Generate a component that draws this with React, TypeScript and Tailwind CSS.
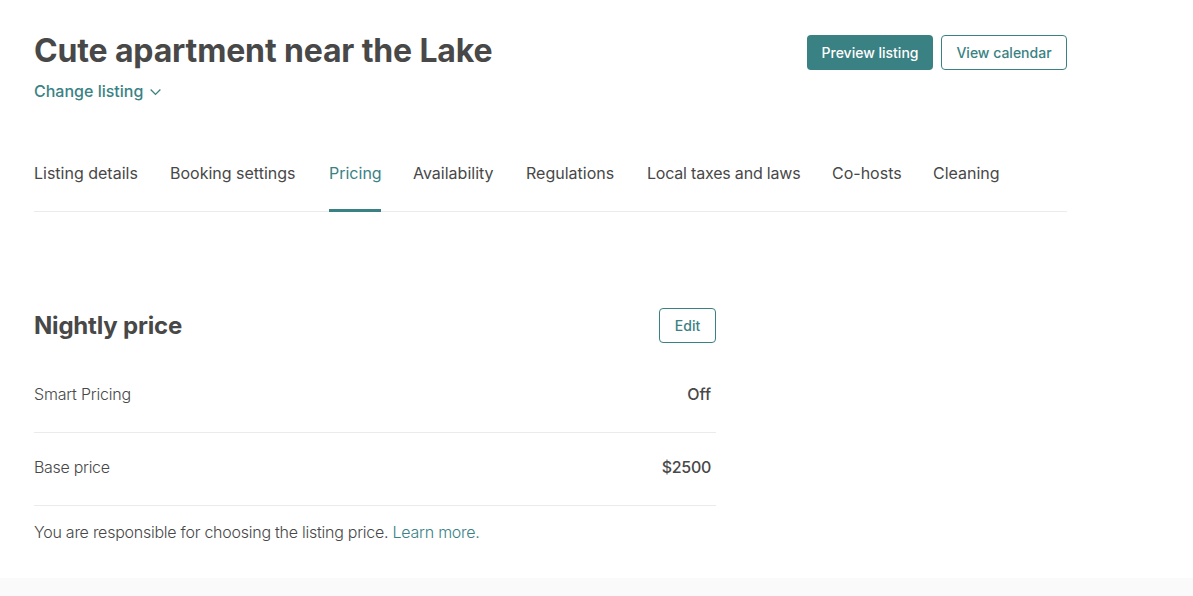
import React from "react";

const tabs: { label: string; cls: string }[] = [
  { label: "Listing details", cls: "w-[104px]" },
  { label: "Booking settings", cls: "w-[127px]" },
  { label: "Pricing", cls: "w-[52px]" },
  { label: "Availability", cls: "w-[81px]" },
  { label: "Regulations", cls: "w-[89px]" },
  { label: "Local taxes and laws", cls: "w-[153px] tracking-[-0.2px]" },
  { label: "Co-hosts", cls: "w-[69px]" },
  { label: "Cleaning", cls: "w-[66px]" },
];

export default function App() {
  return (
    <div
      className="bg-white text-[#484848] min-h-[596px]"
      style={{ fontFamily: "Inter, 'Noto Sans', sans-serif" }}
    >
      <div className="pl-[34px] w-[1067px]">
        <div className="pt-[31px] flex justify-between items-start">
          <div>
            <h1 className="text-[32px] leading-[40px] font-bold tracking-[-0.15px] text-[#484848]">
              Cute apartment near the Lake
            </h1>
            <button className="mt-[8px] flex items-center gap-[6px] text-[16px] leading-[24px] text-[#3a8285] font-medium">
              Change listing
              <svg width="13" height="13" viewBox="0 0 16 16" fill="none" stroke="currentColor" strokeWidth="1.6">
                <path d="M2 5.5l6 6 6-6" />
              </svg>
            </button>
          </div>
          <div className="flex gap-[8px] mt-[4px]">
            <button className="w-[126px] h-[35px] rounded-[4px] bg-[#3a8183] text-white text-[14px] font-medium">
              Preview listing
            </button>
            <button className="w-[126px] h-[35px] rounded-[4px] border border-[#3a8183] text-[#3a8183] text-[14px] font-medium">
              View calendar
            </button>
          </div>
        </div>

        <div className="mt-[58px] flex gap-[32px] border-b border-[#ebebeb]">
          {tabs.map((t) => (
            <div
              key={t.label}
              className={
                t.label === "Pricing"
                  ? `${t.cls} whitespace-nowrap pb-[24px] border-b-[3px] border-[#3a8183] -mb-px text-[16px] leading-[24px] text-[#3a8285]`
                  : `${t.cls} whitespace-nowrap pb-[24px] border-b-[3px] border-transparent -mb-px text-[16px] leading-[24px] text-[#484848]`
              }
            >
              {t.label}
            </div>
          ))}
        </div>

        <div className="mt-[96px] w-[682px]">
          <div className="flex items-center justify-between">
            <h2 className="text-[24px] leading-[32px] font-bold tracking-[-0.2px]">Nightly price</h2>
            <button className="w-[57px] h-[35px] rounded-[4px] border border-[#3a8183] text-[#3a8183] text-[14px] font-medium">
              Edit
            </button>
          </div>
          <div className="mt-[17px] flex justify-between pt-[22px] pb-[26px] border-b border-[#ebebeb] text-[16px] leading-[24px]">
            <span className="font-light tracking-[-0.2px]">Smart Pricing</span>
            <span className="pr-[5px] font-medium">Off</span>
          </div>
          <div className="flex justify-between pt-[22px] pb-[26px] border-b border-[#ebebeb] text-[16px] leading-[24px]">
            <span className="font-light tracking-[-0.3px]">Base price</span>
            <span className="pr-[5px] font-medium tracking-[-0.3px]">$2500</span>
          </div>
          <p className="mt-[14px] text-[16px] leading-[24px] font-light tracking-[-0.25px]">
            You are responsible for choosing the listing price.{" "}
            <span className="text-[#3a8285]">Learn more.</span>
          </p>
        </div>
      </div>
      <div className="mt-[34px] h-[18px] bg-[#fafafa]" />
    </div>
  );
}
